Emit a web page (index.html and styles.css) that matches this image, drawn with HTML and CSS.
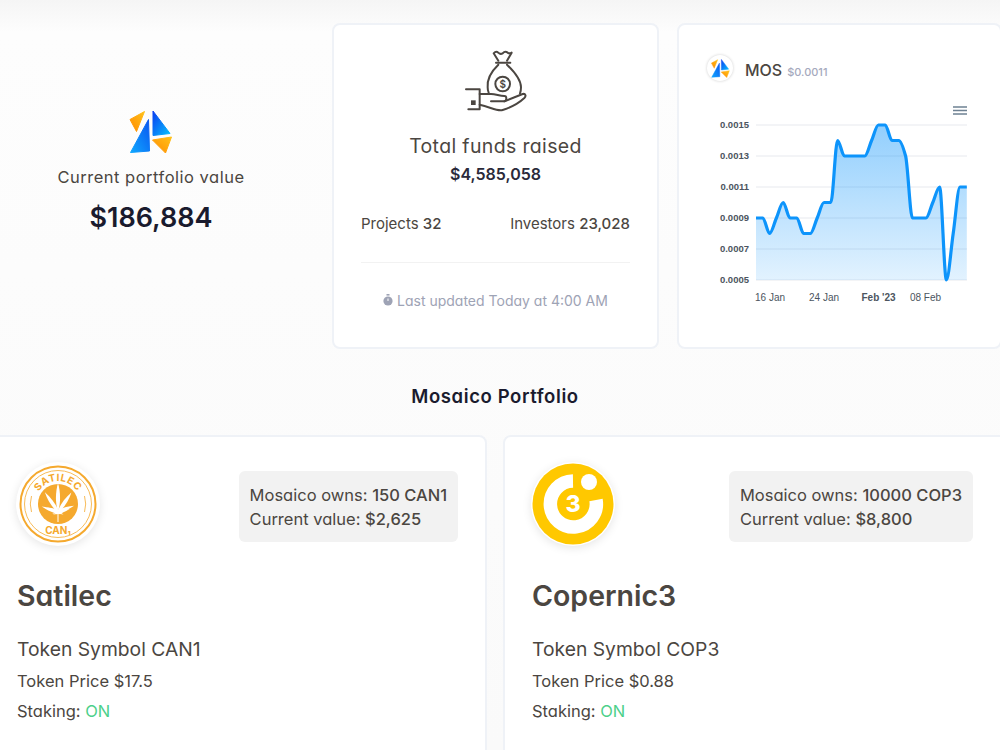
FILE: index.html
```html
<!DOCTYPE html>
<html lang="en">
<head>
  <meta charset="UTF-8">
  <meta name="viewport" content="width=device-width, initial-scale=1.0">
  <title>Mosaico Portfolio</title>
  <link rel="stylesheet" href="styles.css">
</head>
<body>
  <svg class="defs" width="0" height="0" aria-hidden="true">
    <defs>
      <linearGradient id="logoOrange" x1="1" y1="0" x2="0" y2="1">
        <stop offset="0" stop-color="#ffc21a"/>
        <stop offset="1" stop-color="#ff8a00"/>
      </linearGradient>
      <linearGradient id="logoBlueLeft" x1="1" y1="0" x2="0" y2="1">
        <stop offset="0" stop-color="#0a55f0"/>
        <stop offset="1" stop-color="#10a8ff"/>
      </linearGradient>
      <linearGradient id="logoBlueRight" x1="0" y1="0" x2="1" y2="1">
        <stop offset="0" stop-color="#0a3df0"/>
        <stop offset="1" stop-color="#06c0ff"/>
      </linearGradient>
      <linearGradient id="chartFill" x1="0" y1="0" x2="0" y2="1">
        <stop offset="0" stop-color="#0d94fb" stop-opacity="0.45"/>
        <stop offset="1" stop-color="#0d94fb" stop-opacity="0.12"/>
      </linearGradient>
      <symbol id="mosaicoLogo" viewBox="0 0 44 44">
        <path d="M1 9.5 15.5 1.5 7.5 21.5Z" fill="url(#logoOrange)" stroke="url(#logoOrange)" stroke-width="1" stroke-linejoin="round"/>
        <path d="M19.5 9.5 20.5 41 1.5 42.5Z" fill="url(#logoBlueLeft)" stroke="url(#logoBlueLeft)" stroke-width="1" stroke-linejoin="round"/>
        <path d="M24 1 41 23.5 24 25.5Z" fill="url(#logoBlueRight)" stroke="url(#logoBlueRight)" stroke-width="1" stroke-linejoin="round"/>
        <path d="M23.5 30 42.5 27 36.5 43Z" fill="url(#logoOrange)" stroke="url(#logoOrange)" stroke-width="1" stroke-linejoin="round"/>
      </symbol>
    </defs>
  </svg>

  <main class="page">
    <section class="top-row">
      <div class="portfolio">
        <svg class="portfolio-logo" width="44" height="44"><use href="#mosaicoLogo"/></svg>
        <p class="portfolio-label">Current portfolio value</p>
        <p class="portfolio-value">$186,884</p>
      </div>

      <div class="card funds">
        <svg class="bag-icon" width="64" height="64" viewBox="69 57 192 192">
          <g fill="none" stroke="#4b4641" stroke-width="6" stroke-linecap="round" stroke-linejoin="round">
            <path d="M172 92 158 70Q165 62 172 68 178 74 185 70 192 62 200 68 205 72 212 68L198 92"/>
            <path d="M165 98H208"/>
            <path d="M172 104C150 125 138 150 140 172 140 178 141 184 143 188"/>
            <path d="M198 104C225 130 240 155 240 172 240 180 239 185 237 190"/>
            <circle cx="185" cy="162" r="22"/>
            <path d="M75 178H116V238H82"/>
            <path d="M116 192H150C165 192 175 198 190 198 198 198 198 212 190 214H150"/>
            <path d="M190 214 245 192C254 190 256 198 250 204 235 218 210 232 185 240 170 245 150 232 116 224"/>
          </g>
          <rect x="90" y="211" width="14" height="14" fill="#4b4641"/>
          <text x="185" y="173" class="bag-dollar" text-anchor="middle">$</text>
        </svg>
        <h2 class="funds-title">Total funds raised</h2>
        <p class="funds-amount">$4,585,058</p>
        <div class="funds-stats">
          <span>Projects <b>32</b></span>
          <span>Investors <b>23,028</b></span>
        </div>
        <p class="funds-updated">
          <svg width="10" height="12" viewBox="0 0 10 12"><rect x="3.5" y="0" width="3" height="1.6" fill="#9ea3b5"/><circle cx="5" cy="7" r="4.6" fill="#9ea3b5"/><path d="M5 4.5V7" stroke="#fff" stroke-width="1"/></svg>
          Last updated Today at 4:00 AM
        </p>
      </div>

      <div class="card token-chart">
        <div class="chart-head">
          <span class="chart-logo"><svg width="19" height="19"><use href="#mosaicoLogo"/></svg></span>
          <span class="chart-name">MOS</span>
          <span class="chart-price">$0.0011</span>
        </div>
        <svg class="chart" width="290" height="230" viewBox="0 0 290 230">
          <g class="chart-grid">
            <path d="M77 42H288M77 73H288M77 104H288M77 135H288M77 166H288M77 197H288"/>
          </g>
          <path id="chartArea" fill="url(#chartFill)"/>
          <path id="chartLine" fill="none" stroke="#0d94fb" stroke-width="3.2" stroke-linejoin="round"/>
          <g class="chart-y" text-anchor="end">
            <text x="70" y="45">0.0015</text>
            <text x="70" y="76">0.0013</text>
            <text x="70" y="107">0.0011</text>
            <text x="70" y="138">0.0009</text>
            <text x="70" y="169">0.0007</text>
            <text x="70" y="200">0.0005</text>
          </g>
          <g class="chart-x" text-anchor="middle">
            <text x="91" y="218">16 Jan</text>
            <text x="145" y="218">24 Jan</text>
            <text x="199.5" y="218" class="chart-x-bold">Feb '23</text>
            <text x="246.5" y="218">08 Feb</text>
          </g>
          <path d="M274 24H288M274 27.5H288M274 31H288" stroke="#6e8192" stroke-width="1.6"/>
        </svg>
      </div>
    </section>

    <h1 class="section-title">Mosaico Portfolio</h1>

    <section class="holdings">
      <article class="card holding">
        <div class="holding-head">
          <span class="coin">
            <svg width="84" height="84" viewBox="0 0 84 84">
              <defs>
                <path id="satArcTop" d="M19 42A23 23 0 0 1 65 42"/>
                <path id="satBlade" d="M42 50C39 40 39.5 30 42 21 44.5 30 45 40 42 50Z" fill="#fff"/>
              </defs>
              <circle cx="42" cy="42" r="37.5" fill="#fff" stroke="#f5a92e" stroke-width="2"/>
              <circle cx="42" cy="42" r="33.5" fill="none" stroke="#f5a92e" stroke-width="0.8"/>
              <path d="M15.5 34A28 28 0 0 0 15.5 50M68.5 34A28 28 0 0 1 68.5 50" fill="none" stroke="#f5a92e" stroke-width="0.8"/>
              <circle cx="42" cy="42" r="20" fill="#f5a92e"/>
              <use href="#satBlade"/>
              <use href="#satBlade" transform="rotate(34 42 50) translate(3.5 7) scale(.92)"/>
              <use href="#satBlade" transform="rotate(-34 42 50) translate(3.5 7) scale(.92)"/>
              <use href="#satBlade" transform="rotate(70 42 50) translate(8 16) scale(.8)"/>
              <use href="#satBlade" transform="rotate(-70 42 50) translate(8 16) scale(.8)"/>
              <use href="#satBlade" transform="rotate(108 42 50) translate(16 32) scale(.6)"/>
              <use href="#satBlade" transform="rotate(-108 42 50) translate(16 32) scale(.6)"/>
              <path d="M42 50V60" stroke="#fff" stroke-width="1"/>
              <text class="sat-text sat-top"><textPath href="#satArcTop" startOffset="50%" text-anchor="middle">SATILEC</textPath></text>
              <text class="sat-text" x="42" y="72" text-anchor="middle">CAN₁</text>
            </svg>
          </span>
          <div class="owned">
            <div>Mosaico owns: <b>150 CAN1</b></div>
            <div>Current value: <b>$2,625</b></div>
          </div>
        </div>
        <h3 class="holding-name">Satilec</h3>
        <p class="holding-symbol">Token Symbol CAN1</p>
        <p class="holding-line">Token Price $17.5</p>
        <p class="holding-line">Staking: <span class="on">ON</span></p>
      </article>

      <article class="card holding">
        <div class="holding-head">
          <span class="coin">
            <svg width="84" height="84" viewBox="0 0 84 84">
              <circle cx="42" cy="42" r="40.5" fill="#ffc800"/>
              <path d="M42 19A23 23 0 1 0 65 38" fill="none" stroke="#fff" stroke-width="13.5"/>
              <circle cx="58" cy="20" r="8" fill="#fff"/>
              <text class="cop-text" x="42" y="50" text-anchor="middle">3</text>
            </svg>
          </span>
          <div class="owned">
            <div>Mosaico owns: <b>10000 COP3</b></div>
            <div>Current value: <b>$8,800</b></div>
          </div>
        </div>
        <h3 class="holding-name">Copernic3</h3>
        <p class="holding-symbol">Token Symbol COP3</p>
        <p class="holding-line">Token Price $0.88</p>
        <p class="holding-line">Staking: <span class="on">ON</span></p>
      </article>
    </section>
  </main>

  <script src="chart.js"></script>
</body>
</html>
```

FILE: styles.css
```css
* {
  box-sizing: border-box;
}

html, body {
  height: 100%;
}

body {
  margin: 0;
  overflow: hidden;
  background: linear-gradient(#f5f5f5 0, #fdfdfd 32px, #fafafa 100%);
  color: #4b4641;
  font-family: Inter, "Noto Sans", "Liberation Sans", sans-serif;
  font-feature-settings: "cv11";
  font-size: 15px;
}

p, h1, h2, h3 {
  margin: 0;
  font-weight: 400;
}

b {
  font-weight: 500;
}

.defs {
  position: absolute;
}

.page {
  width: 1020px;
  padding-top: 23px;
}

.card {
  background: #fff;
  border: 2px solid #eff2f7;
  border-radius: 8px;
}

/* top row */
.top-row {
  display: flex;
  height: 326px;
}

.portfolio {
  width: 302px;
  margin-right: 30px;
  padding-top: 87px;
  display: flex;
  flex-direction: column;
  align-items: center;
}

.portfolio-logo {
  display: block;
}

.portfolio-label {
  margin-top: 11px;
  font-size: 16.5px;
  letter-spacing: 0.5px;
  line-height: 24px;
}

.portfolio-value {
  margin-top: 11px;
  font-size: 27px;
  line-height: 36px;
  font-weight: 600;
  color: #1a1b2e;
}

.funds {
  width: 327px;
  margin-right: 18px;
  padding: 24px 27px 0;
  display: flex;
  flex-direction: column;
  align-items: center;
}

.bag-icon {
  display: block;
}

.bag-dollar {
  font-size: 30px;
  font-weight: 600;
  fill: #4b4641;
}

.funds-title {
  margin-top: 18px;
  font-size: 19.5px;
  letter-spacing: 0.35px;
  line-height: 30px;
}

.funds-amount {
  margin-top: 1px;
  font-size: 16px;
  line-height: 24px;
  font-weight: 600;
  color: #2a2a3a;
}

.funds-stats {
  width: 100%;
  margin-top: 26px;
  padding-bottom: 26px;
  display: flex;
  justify-content: space-between;
  line-height: 24px;
  border-bottom: 1px solid #f2f2f2;
}

.funds-updated {
  margin-top: 26px;
  font-size: 14px;
  line-height: 24px;
  color: #9ea3b5;
}

.token-chart {
  width: 325px;
  padding: 0;
}

.chart-head {
  display: flex;
  align-items: baseline;
  padding: 30px 0 0 28px;
}

.chart-logo {
  align-self: flex-start;
  width: 26px;
  height: 26px;
  margin-right: 12px;
  display: flex;
  align-items: center;
  justify-content: center;
  border-radius: 50%;
  background: #fff;
  box-shadow: 0 0 3px rgba(0, 0, 0, 0.2);
}

.chart-name {
  font-size: 16px;
  line-height: 30px;
  font-weight: 500;
  color: #4b4641;
}

.chart-price {
  margin-left: 5px;
  font-size: 11px;
  font-weight: 500;
  color: #a5a9bd;
}

.chart {
  display: block;
  margin-top: -2px;
  font-family: "Liberation Sans", Arial, sans-serif;
  font-feature-settings: normal;
  overflow: visible;
}

.chart-grid path {
  fill: none;
  stroke: #e7e9ee;
  stroke-width: 1;
}

.chart-y text {
  font-size: 9.5px;
  font-weight: 700;
  fill: #4c5560;
}

.chart-x text {
  font-size: 10px;
  fill: #4c5560;
}

.chart-x .chart-x-bold {
  font-weight: 700;
}

/* portfolio */
.section-title {
  margin-top: 33px;
  text-align: center;
  width: 990px;
  font-size: 18.5px;
  letter-spacing: 0.6px;
  line-height: 28px;
  font-weight: 600;
  color: #1a1b2e;
}

.holdings {
  display: flex;
  gap: 16px;
  margin-top: 25px;
  margin-left: -15px;
}

.holding {
  width: 503px;
  height: 340px;
  padding: 25px 27px 0 30px;
}

.holding + .holding {
  width: 518px;
  padding: 25px 45px 0 27px;
}

.holding-head {
  display: flex;
  justify-content: space-between;
  align-items: flex-start;
}

.coin {
  display: block;
  width: 84px;
  height: 84px;
  margin-left: -1px;
  border-radius: 50%;
  background: #fff;
  box-shadow: 0 2px 10px rgba(0, 0, 0, 0.1);
}

.coin svg {
  display: block;
}

.owned {
  margin-top: 9px;
  padding: 11.5px 11px;
  border-radius: 6px;
  background: #f2f2f2;
  font-size: 16.5px;
  line-height: 24px;
}

.holding-name {
  margin-top: 30px;
  font-size: 28.5px;
  line-height: 40px;
  font-weight: 600;
}

.holding-symbol {
  margin-top: 18px;
  font-size: 19.3px;
  line-height: 30px;
}

.holding-line {
  margin-top: 5px;
  font-size: 16.5px;
  line-height: 25px;
}

.on {
  color: #4cd08a;
}

.sat-text {
  font-size: 10px;
  font-weight: 700;
  fill: #f5a92e;
}

.sat-top {
  letter-spacing: 0.6px;
}

.cop-text {
  font-size: 23px;
  font-weight: 800;
  fill: #fff;
}
```

FILE: chart.js
```js
// daily MOS price, in 0.0001 steps
var prices = [9, 9, 8, 9, 10, 9, 9, 8, 8, 9, 10, 10, 14, 13, 13, 13, 13, 14, 15, 15, 14, 14, 13, 9, 9, 9, 10, 11, 5, 8, 11, 11];

var startX = 77;
var stepX = 6.8;
var bottom = 197;

function px(i) { return startX + i * stepX; }
function py(v) { return 42 + (15 - v) * 15.5; }

// monotone curve, flat at every peak and plateau
function slope(i) {
  if (i === 0 || i === prices.length - 1) return 0;
  var a = prices[i] - prices[i - 1];
  var b = prices[i + 1] - prices[i];
  if (a * b <= 0) return 0;
  return (2 * a * b) / (a + b);
}

var d = 'M' + px(0) + ' ' + py(prices[0]);
for (var i = 0; i < prices.length - 1; i++) {
  var c1 = prices[i] + slope(i) / 3;
  var c2 = prices[i + 1] - slope(i + 1) / 3;
  d += 'C' + (px(i) + stepX / 3) + ' ' + py(c1) + ' ' + (px(i + 1) - stepX / 3) + ' ' + py(c2) + ' ' + px(i + 1) + ' ' + py(prices[i + 1]);
}

document.getElementById('chartLine').setAttribute('d', d);
document.getElementById('chartArea').setAttribute('d', d + 'V' + bottom + 'H' + startX + 'Z');
```
